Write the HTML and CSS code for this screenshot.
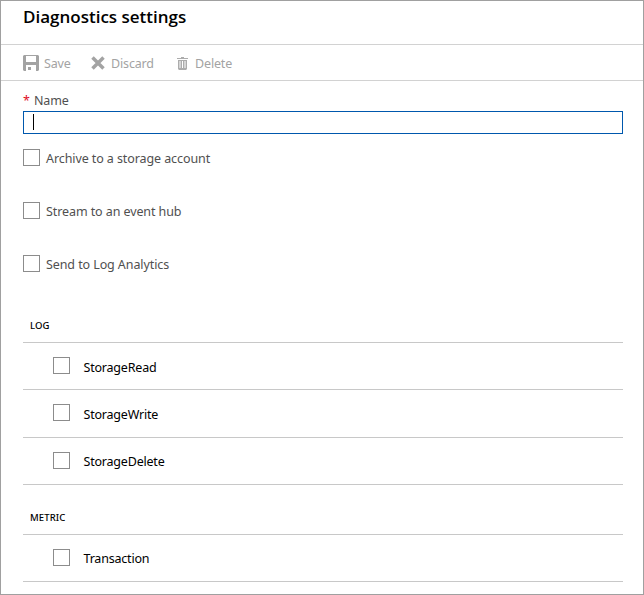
FILE: index.html
```html
<!DOCTYPE html>
<html lang="en">
<head>
<meta charset="utf-8">
<title>Diagnostics settings</title>
<link rel="stylesheet" href="styles.css">
</head>
<body>
<main class="blade">
  <header class="header"><h1>Diagnostics settings</h1></header>
  <nav class="toolbar">
    <button class="command save"><svg width="16" height="16" viewBox="0 0 16 16"><path fill="currentColor" fill-rule="evenodd" d="M1 0h14l1 1v14l-1 1h-2v-6H3v6H1l-1-1V1zM3 1v6h10V1zM5 12h3v3H5z"/></svg><span>Save</span></button>
    <button class="command discard"><svg width="14" height="14" viewBox="0 0 14 14"><path fill="none" stroke="currentColor" stroke-width="3.5" d="M1.5 1.5l11 11M12.5 1.5l-11 11"/></svg><span>Discard</span></button>
    <button class="command delete"><svg width="11" height="13" viewBox="0 0 11 13"><path fill="currentColor" fill-opacity=".9" fill-rule="evenodd" d="M4 0h3v1h4v1H0V1h4zM1 3h9v9l-1 1H2l-1-1zM2.5 4v7h1V4zM5 4v7h1V4zM7.5 4v7h1V4z"/></svg><span>Delete</span></button>
  </nav>
  <form class="content">
    <label class="name-label" for="name"><span class="required">*</span><span>Name</span></label>
    <div class="name-input" id="name" role="textbox"><span class="caret"></span></div>
    <div class="option"><span class="box"></span><span class="label">Archive to a storage account</span></div>
    <div class="option"><span class="box"></span><span class="label">Stream to an event hub</span></div>
    <div class="option"><span class="box"></span><span class="label">Send to Log Analytics</span></div>
    <section class="group">
      <h2>LOG</h2>
      <div class="row"><span class="box"></span><span class="label low">StorageRead</span></div>
      <div class="row tall"><span class="box"></span><span class="label low">StorageWrite</span></div>
      <div class="row"><span class="box"></span><span class="label">StorageDelete</span></div>
    </section>
    <section class="group metric">
      <h2>METRIC</h2>
      <div class="row"><span class="box"></span><span class="label">Transaction</span></div>
    </section>
  </form>
</main>
</body>
</html>
```
FILE: styles.css
```css
* { box-sizing: border-box; }
body { margin: 0; background: #fff; }
.blade {
  width: 644px;
  height: 595px;
  border: 1px solid #a0a0a0;
  overflow: hidden;
  font: 12.5px/18px "Noto Sans", "Open Sans", sans-serif;
  letter-spacing: -0.15px;
  color: #505050;
}
.header { height: 44px; padding: 4px 22px 0; border-bottom: 1px solid #d2d2d2; }
h1 {
  margin: 0;
  font: 600 17px/24px "Open Sans", sans-serif;
  letter-spacing: 0;
  color: #000;
}
.toolbar {
  display: flex;
  height: 36px;
  padding: 0 22px;
  border-bottom: 1px solid #d2d2d2;
}
.command {
  display: flex;
  align-items: center;
  padding: 1px 0 0;
  border: 0;
  background: none;
  font: inherit;
  letter-spacing: inherit;
  color: #a3a3a3;
}
.command svg { flex: none; }
.command span { padding-top: 1px; }
.save { width: 68px; gap: 5px; }
.discard { width: 86px; gap: 6px; }
.delete { gap: 7px; }
.content { padding: 11px 20px 0 22px; }
.name-label { display: flex; gap: 5px; height: 19px; }
.required { width: 6px; color: #e00b1c; }
.name-input {
  height: 23px;
  margin-bottom: 15px;
  padding: 2px 9px;
  border: 1px solid #0058ad;
}
.caret { display: block; width: 1px; height: 16px; background: #000; }
.option { display: flex; gap: 6px; height: 53px; letter-spacing: -0.09px; }
.box { flex: none; width: 17px; height: 17px; border: 1px solid #8c8c8c; }
.label { padding-top: 1px; }
.low { padding-top: 2px; }
.group { color: #000; }
.group h2 {
  height: 35px;
  margin: 0;
  padding: 9px 7px 0;
  border-bottom: 1px solid #c8c8c8;
  font-size: 9.5px;
  line-height: 18px;
  font-weight: 500;
  letter-spacing: 0.1px;
}
.metric h2 { height: 50px; padding-top: 24px; }
.row {
  display: flex;
  gap: 13.5px;
  height: 47px;
  padding: 14px 30px 0;
  border-bottom: 1px solid #c8c8c8;
  letter-spacing: -0.2px;
}
.tall { height: 48px; }
```
